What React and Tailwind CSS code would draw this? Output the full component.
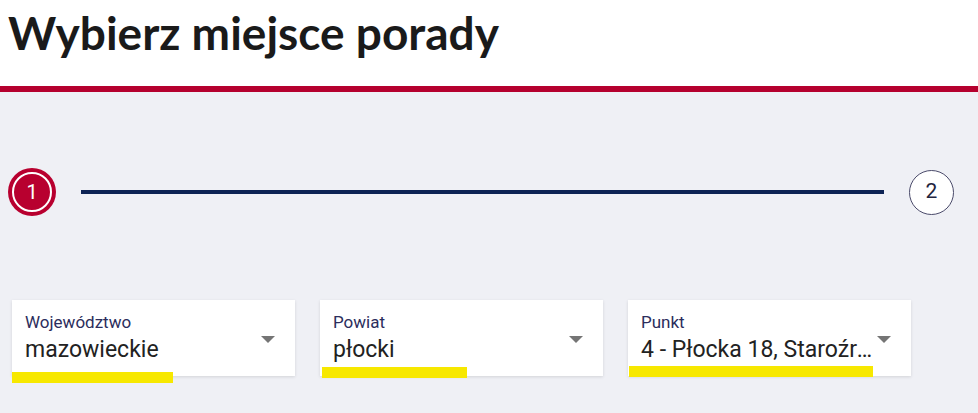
import React from 'react'

const Select = ({ label, value, markLeft, markTop, markWidth }) => {
  return (
    <div className="relative w-[283px] h-[76px] bg-white shadow-[0_1px_3px_rgba(0,0,0,0.12)] pl-[13px] pr-[20px] pt-[12px] flex">
      <div className="flex-1 min-w-0">
        <div className="text-[17px] leading-[20px] text-[#2b2d5c] font-['Roboto',sans-serif]">{label}</div>
        <div className="text-[23px] leading-[32px] mt-[2px] text-[#222] font-['Roboto',sans-serif] truncate pr-[4px]">{value}</div>
      </div>
      <div className="pt-[24px]">
        <div className="w-0 h-0 border-l-[7px] border-r-[7px] border-t-[7px] border-l-transparent border-r-transparent border-t-[#757575]" />
      </div>
      <div className="absolute h-[11px] bg-[#f7e800]" style={{ left: markLeft, top: markTop, width: markWidth }} />
    </div>
  )
}

const App = () => {
  return (
    <div className="w-[978px] h-[413px] bg-[#eff0f5] overflow-hidden">
      <header className="h-[86px] bg-white px-[8px] pt-[5px]">
        <h1 className="text-[46px] leading-[56px] font-bold text-[#1a1a1a] font-['Lato',sans-serif]">Wybierz miejsce porady</h1>
      </header>
      <div className="h-[6px] bg-[#b5002e]" />
      <section className="px-[8px] pt-[76px]">
        <div className="flex items-center">
          <div className="w-[48px] h-[48px] rounded-full bg-[#b8002f] flex items-center justify-center">
            <div className="w-[40px] h-[40px] rounded-full border-2 border-white flex items-center justify-center text-white text-[20px] font-['Roboto',sans-serif]">1</div>
          </div>
          <div className="flex-1 h-[4px] bg-[#0d2354] mx-[25px]" />
          <div className="w-[45px] h-[45px] rounded-full border border-[#4a4a6a] bg-white flex items-center justify-center text-[#1f2540] text-[21px] font-['Roboto',sans-serif] mr-[16px]">2</div>
        </div>
        <div className="flex gap-[25px] pt-[84px] pl-[4px]">
          <Select label="Województwo" value="mazowieckie" markLeft={0} markTop={72} markWidth={161} />
          <Select label="Powiat" value="płocki" markLeft={2} markTop={67} markWidth={145} />
          <Select label="Punkt" value="4 - Płocka 18, Staroźreby" markLeft={1} markTop={66} markWidth={244} />
        </div>
      </section>
    </div>
  )
}

export default App
